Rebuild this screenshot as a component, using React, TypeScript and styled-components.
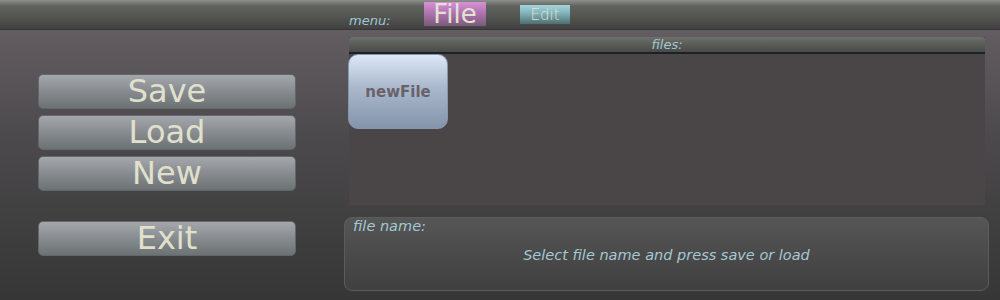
import React from "react";
import styled, { createGlobalStyle } from "styled-components";

const GlobalStyle = createGlobalStyle`
  html, body {
    margin: 0;
    padding: 0;
    background: #363636;
  }
  body {
    font-family: "DejaVu Sans", Verdana, sans-serif;
  }
`;

const Screen = styled.div`
  width: 1000px;
  height: 300px;
  display: flex;
  flex-direction: column;
  overflow: hidden;
  background: linear-gradient(to bottom, #6a6268 0%, #4c4a4c 45%, #363636 100%);
`;

const TopBar = styled.div`
  height: 30px;
  flex-shrink: 0;
  display: flex;
  align-items: flex-start;
  padding-left: 349px;
  box-sizing: border-box;
  border-bottom: 1px solid #353535;
  background: linear-gradient(to bottom, #8e908c 0px, #60625e 6px, #545652 16px, #414141 29px);
`;

const MenuLabel = styled.span`
  font-style: italic;
  font-size: 13px;
  color: #9fc6d0;
  margin-top: 13px;
  width: 75px;
`;

const MenuTab = styled.div<{ $active?: boolean }>`
  display: flex;
  align-items: center;
  justify-content: center;
  color: #e2e2d2;
  box-sizing: border-box;
  ${(p) =>
    p.$active
      ? `
    width: 62px;
    height: 24px;
    margin-top: 2px;
    margin-right: 34px;
    font-size: 26px;
    background: linear-gradient(to bottom, #d890d8 0%, #b074b0 45%, #7a5c78 100%);
  `
      : `
    width: 50px;
    height: 19px;
    margin-top: 5px;
    font-size: 15px;
    font-weight: 300;
    background: linear-gradient(to bottom, #a6d4dc 0%, #80b2b8 45%, #4f6e70 100%);
  `}
`;

const Body = styled.div`
  flex: 1;
  display: grid;
  grid-template-columns: 344px 645px;
`;

const SideMenu = styled.div`
  display: flex;
  flex-direction: column;
  padding: 44px 0 0 38px;
  gap: 6px;
`;

const SideButton = styled.button<{ $gap?: boolean }>`
  width: 258px;
  height: 35px;
  padding: 0;
  margin-top: ${(p) => (p.$gap ? "24px" : "0")};
  box-sizing: border-box;
  border: 1px solid #62686a;
  border-radius: 5px;
  background: linear-gradient(to bottom, #a4a8ac 0%, #8a8e92 45%, #6c7274 100%);
  color: #e0e0cc;
  font-family: "DejaVu Sans", Verdana, sans-serif;
  font-size: 32px;
  line-height: 33px;
  text-align: center;
`;

const Content = styled.div`
  display: flex;
  flex-direction: column;
  padding-top: 7px;
`;

const FilesPanel = styled.div`
  margin-left: 5px;
  width: 636px;
  height: 168px;
  display: flex;
  flex-direction: column;
  background: #4a4648;
`;

const PanelHeader = styled.div`
  height: 15px;
  border-bottom: 2px solid #1a2228;
  border-radius: 3px 3px 0 0;
  background: linear-gradient(to bottom, #6e706c 0%, #5a5c58 50%, #4a4a48 100%);
  font-style: italic;
  font-size: 13px;
  line-height: 15px;
  color: #a4c8d0;
  text-align: center;
`;

const FileGrid = styled.div`
  display: flex;
  flex-wrap: wrap;
  margin-left: -1px;
`;

const FileTile = styled.div`
  width: 100px;
  height: 75px;
  box-sizing: border-box;
  border: 1px solid #8896aa;
  border-radius: 10px;
  background: linear-gradient(to bottom, #dce8f8 0%, #aab8cc 45%, #8494aa 100%);
  display: flex;
  align-items: center;
  justify-content: center;
  color: #6a6268;
  font-weight: bold;
  font-size: 15px;
`;

const NamePanel = styled.div`
  margin-top: 12px;
  width: 645px;
  height: 74px;
  box-sizing: border-box;
  border: 1px solid #5c5c5c;
  border-radius: 8px;
  background: linear-gradient(to bottom, #565656 0%, #484848 60%, #404040 100%);
  padding: 0 0 0 8px;
  display: flex;
  flex-direction: column;
`;

const NameLabel = styled.span`
  font-style: italic;
  font-size: 14.5px;
  color: #a4c8d2;
  line-height: 16px;
`;

const Hint = styled.span`
  font-style: italic;
  font-size: 14.5px;
  color: #a4c8d2;
  text-align: center;
  margin-top: 13px;
  padding-right: 8px;
`;

const App = () => {
  return (
    <Screen>
      <GlobalStyle />
      <TopBar>
        <MenuLabel>menu:</MenuLabel>
        <MenuTab $active>File</MenuTab>
        <MenuTab>Edit</MenuTab>
      </TopBar>
      <Body>
        <SideMenu>
          <SideButton>Save</SideButton>
          <SideButton>Load</SideButton>
          <SideButton>New</SideButton>
          <SideButton $gap>Exit</SideButton>
        </SideMenu>
        <Content>
          <FilesPanel>
            <PanelHeader>files:</PanelHeader>
            <FileGrid>
              <FileTile>newFile</FileTile>
            </FileGrid>
          </FilesPanel>
          <NamePanel>
            <NameLabel>file name:</NameLabel>
            <Hint>Select file name and press save or load</Hint>
          </NamePanel>
        </Content>
      </Body>
    </Screen>
  );
};

export default App;
